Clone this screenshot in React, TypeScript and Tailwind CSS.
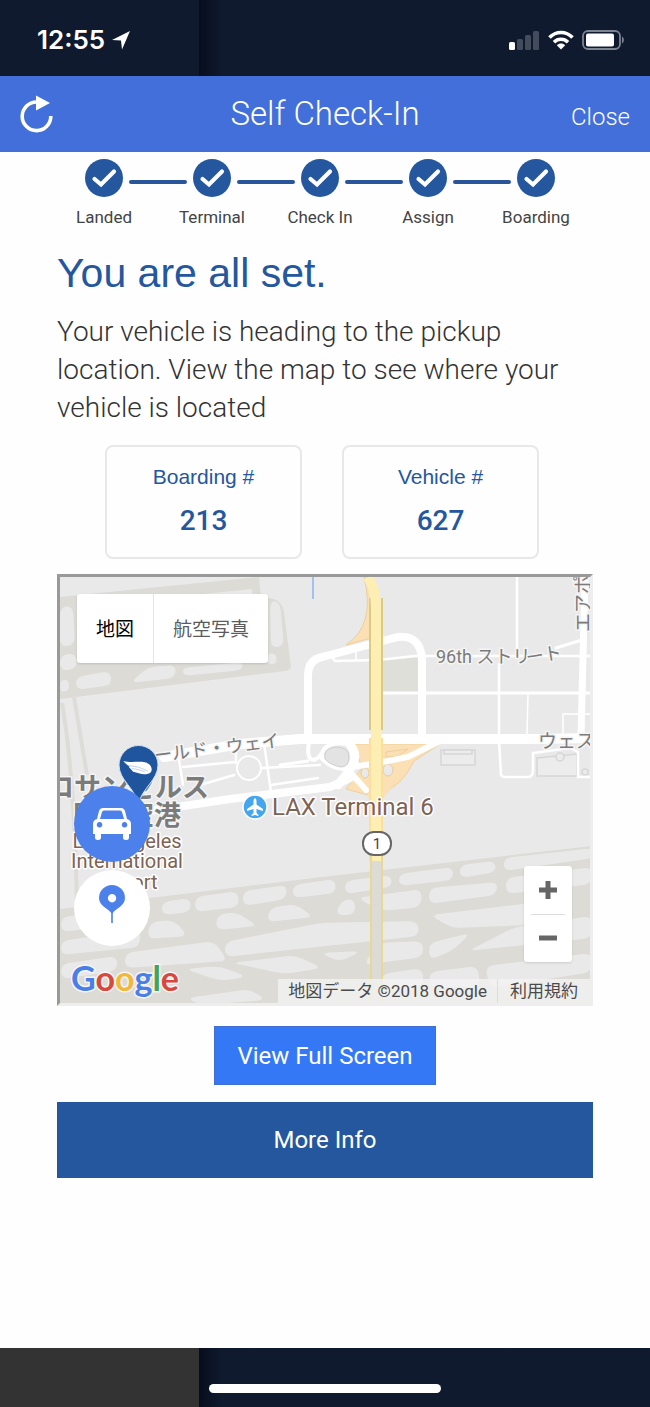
import type { ReactNode } from 'react';

const steps = ['Landed', 'Terminal', 'Check In', 'Assign', 'Boarding'];

const details = [
  { label: 'Boarding #', value: '213' },
  { label: 'Vehicle #', value: '627' },
];

// Grass areas between the taxiways
const islands = [
  '61,917 135,908 140,923 61,932',
  '162,902 190,898 191,912 162,915',
  '195,897 238,891 239,907 195,912',
  '243,891 287,885 286,899 243,906',
  '293,885 335,879 336,893 293,898',
  '345,881 391,875 392,887 345,894',
  '399,874 453,867 453,880 399,886',
  '460,865 495,861 496,872 460,878',
  '504,858 594,848 594,858 504,871',
  '61,941 140,929 140,947 61,955',
  '147,939 150,922 174,920 188,936',
  '216,930 217,915 236,912 258,926',
  '267,922 270,908 295,904 314,917',
  '335,915 342,900 355,899 355,915',
  '357,898 422,889 421,907 382,911',
  '429,888 498,882 496,895 429,904',
  '506,878 592,867 592,884 506,894',
  '125,953 214,941 228,961 125,968',
  '225,942 320,923 418,921 419,936 225,957',
  '430,915 574,898 530,925 452,928',
  '468,951 515,927 592,916 592,938',
  '61,964 117,956 117,971 61,979',
  '185,969 220,966 247,977 220,981',
  '232,963 295,955 322,968 285,974',
  '320,953 361,951 340,962',
  '363,965 379,943 423,941 423,957',
  '429,960 429,943 471,933 452,951',
  '485,966 592,953 592,972 490,988',
  '382,974 423,968 423,987 382,987',
  '429,972 478,966 480,987 430,987',
  '187,998 250,989 266,1000 200,1005',
  '60,607 73,606 75,645 60,647',
  '60,655 76,653 77,669 60,671',
  '60,680 69,680 69,691 60,692',
  '76,677 110,671 112,685 76,690',
  '130,683 148,667 176,665 175,678',
  '182,668 243,662 242,670 184,676',
  '270,601 280,602 284,646 271,648',
  '267,654 276,653 277,664 267,664',
];

const googleLetters = [
  { char: 'G', color: 'fill-[#4a7fe8]' },
  { char: 'o', color: 'fill-[#d8483c]' },
  { char: 'o', color: 'fill-[#f0b93a]' },
  { char: 'g', color: 'fill-[#4a7fe8]' },
  { char: 'l', color: 'fill-[#43a35a]' },
  { char: 'e', color: 'fill-[#d8483c]' },
];

// Turns a list of points into a closed path with rounded corners
function roundedPath(points: string, radius: number) {
  const corners = points.split(' ').map((pair) => pair.split(',').map(Number));

  const towards = (from: number[], to: number[]) => {
    const length = Math.hypot(to[0] - from[0], to[1] - from[1]);
    const ratio = Math.min(radius / length, 0.5);
    return `${from[0] + (to[0] - from[0]) * ratio} ${from[1] + (to[1] - from[1]) * ratio}`;
  };

  const segments = corners.map((corner, index) => {
    const previous = corners[(index + corners.length - 1) % corners.length];
    const next = corners[(index + 1) % corners.length];
    return `${index === 0 ? 'M' : 'L'}${towards(corner, previous)} Q${corner[0]} ${corner[1]} ${towards(corner, next)}`;
  });

  return `${segments.join(' ')} Z`;
}

function StatusBar() {
  return (
    <div className="flex h-[76px] bg-[#0f1a2e] text-white">
      <div className="flex w-[199px] items-center gap-1.5 pl-[37px] pt-1">
        <span className="font-['Inter',sans-serif] text-[26px] leading-8 font-semibold">12:55</span>
        <svg className="h-5 w-5" viewBox="0 0 20 20" fill="currentColor" aria-hidden="true">
          <path d="M19 1 L1 10 L10 10.6 L11 19.5 Z" />
        </svg>
      </div>
      <div className="flex flex-1 items-center justify-end gap-2 bg-linear-to-r from-[#070d1d] to-[#0f1a2e] to-5% pr-[25px] pt-1">
        <svg className="h-5 w-[31px]" viewBox="0 0 31 20" fill="currentColor" aria-hidden="true">
          <rect x="0" y="12" width="6" height="8" rx="1.5" />
          <rect x="8" y="9" width="6" height="11" rx="1.5" opacity=".22" />
          <rect x="16" y="5" width="6" height="15" rx="1.5" opacity=".22" />
          <rect x="24" y="1" width="6" height="19" rx="1.5" opacity=".22" />
        </svg>
        <svg className="h-5 w-[26px]" viewBox="0 0 26 20" fill="none" stroke="currentColor" strokeWidth="3.6" aria-hidden="true">
          <path d="M1.5 7.5 C8 0.8 18 0.8 24.5 7.5" />
          <path d="M6 12.2 C10 8.3 16 8.3 20 12.2" />
          <path d="M13 19.5 L8.8 15.2 C11.2 13 14.8 13 17.2 15.2 Z" fill="currentColor" stroke="none" />
        </svg>
        <svg className="h-5 w-[43px]" viewBox="0 0 43 20" aria-hidden="true">
          <rect x="1" y="1" width="37" height="18" rx="5" fill="none" stroke="#7d8391" strokeWidth="1.8" />
          <rect x="4" y="3.5" width="28" height="13" rx="2" fill="#fff" />
          <path d="M40 6.5 C42.5 8 42.5 12 40 13.5 Z" fill="#7d8391" />
        </svg>
      </div>
    </div>
  );
}

function Header() {
  return (
    <header className="grid h-[76px] grid-cols-[1fr_auto_1fr] items-center bg-[#426fda] px-5 font-light text-white">
      <button type="button" aria-label="Refresh" className="justify-self-start">
        <svg className="h-10 w-9" viewBox="0 0 36 40" aria-hidden="true">
          <path d="M30.8 22 A14.3 14.3 0 1 1 16.5 8" fill="none" stroke="#fff" strokeWidth="3.6" />
          <path d="M16 1.5 L30 9 L16 16.5 Z" fill="#fff" />
        </svg>
      </button>
      <h1 className="text-[33px] leading-10">Self Check-In</h1>
      <button type="button" className="justify-self-end pt-1.5 text-[24px] leading-8">Close</button>
    </header>
  );
}

function Steps() {
  return (
    <ol className="flex pt-[7px] pr-[95px] pl-[85px]">
      {steps.map((step, index) => {
        const isLast = index === steps.length - 1;

        return (
          <li key={step} className={isLast ? 'flex' : 'flex flex-1'}>
            <div className="flex w-[38px] flex-col items-center gap-2">
              <svg className="size-[38px]" viewBox="0 0 38 38" aria-hidden="true">
                <circle cx="19" cy="19" r="19" fill="#24579e" />
                <path d="M9.5 20 L16 25.5 L29 12.5" fill="none" stroke="#fff" strokeWidth="4.2" strokeLinecap="round" />
              </svg>
              <span className="text-[17px] leading-6 whitespace-nowrap text-[#444]">{step}</span>
            </div>
            {!isLast && <div className="mx-1.5 mt-[21px] h-1 flex-1 rounded-full bg-[#2b559a]" />}
          </li>
        );
      })}
    </ol>
  );
}

function MapDrawing() {
  return (
    <svg
      className="absolute inset-0 h-full w-full font-['Roboto','Noto_Sans_CJK_JP',sans-serif]"
      viewBox="60 577 530 426"
      preserveAspectRatio="xMidYMid slice"
      lang="ja"
      role="img"
      aria-label="LAX Terminal 6"
    >
      <rect x="0" y="500" width="700" height="600" fill="#e9e9e9" />

      {/* Taxiways */}
      <g fill="#dcdbd6">
        <path d="M60 597 L259 577 L261 598 Q281 596 284 612 L291 667 Q290 670 285 671 L60 699 Z" />
        <path d="M60 909 L330 876 L592 846 V1003 H60 Z" />
      </g>
      <path d="M78 607 L252 589 L256 660 L80 662 Z" fill="#e9e9e9" />
      <path d="M74 697 L87 775 M62 703 Q74 770 77 905" stroke="#dddcd8" strokeWidth="4" fill="none" />
      <g fill="#e9e9e9">
        {islands.map((points) => (
          <path key={points} d={roundedPath(points, 9)} />
        ))}
      </g>

      {/* Blocks and buildings */}
      <path d="M383 660 L419 657 V692 H383 Z" fill="#dfdfda" />
      <g fill="#ececec" stroke="#d6d6d6" strokeWidth="1.5">
        <rect x="441" y="750" width="34" height="15" />
        <rect x="444" y="750" width="28" height="4" />
        <path d="M537 758 L577 754 V776 H537 Z" />
        <circle cx="560" cy="757" r="4" />
        <circle cx="585" cy="772" r="3" />
      </g>

      {/* Interchange */}
      <g fill="#fae0b4" stroke="#eed09c" strokeWidth="1">
        <path d="M354 744 H440 L414 761 Q400 789 382 791 L368 795 L346 789 L362 768 Z" />
        <path d="M364 577 Q376 625 346 645 L371 638 V577 Z" />
        <path d="M366 785 L392 788 L383 798 V830 H369 V800 Z" stroke="none" />
        <path d="M386 752 L408 749 L398 756 L386 757 Z" fill="none" />
      </g>
      <g fill="#e9e9e9" stroke="#e6cd9f" strokeWidth="1">
        <ellipse cx="388" cy="770" rx="5" ry="6" />
        <ellipse cx="365" cy="773" rx="4" ry="5" />
      </g>

      {/* Streets */}
      <g fill="none" stroke="#fff" strokeLinecap="round">
        <path d="M164 757 L240 744 L300 739 H540 L592 738" strokeWidth="10" />
        <path d="M130 814 L230 799 L330 787 L350 778" strokeWidth="8" />
        <path d="M308 738 V676 Q308 660 322 657 L398 637 Q421 635 422 660 V736" strokeWidth="8" />
        <path d="M585 577 L583 658 L581 736" strokeWidth="7" />
        <path d="M322 757 Q334 771 352 767 L378 763 L408 757 L440 741" strokeWidth="6" />
        <path d="M348 742 Q359 754 352 766 Q346 776 338 785" strokeWidth="9" />
        <path d="M350 772 L366 790" strokeWidth="6" />
        <path d="M309 742 Q306 760 314 760 Q320 758 324 749 Q332 741 348 744" strokeWidth="4" />
        <path d="M280 765 L308 761" strokeWidth="3" />
        <path d="M383 693 H592" strokeWidth="3" />
        <path d="M331 656 L335 661 L378 660 L415 656 H592" strokeWidth="2.5" />
        <path d="M517 577 V648 M499 664 V740 L501 775 Q502 777 505 777 H528 Q533 777 533 770 V753 L570 748 L578 752 V777 H592" strokeWidth="2.5" />
        <path d="M528 695 L527 736 M592 714 H563 V736 M356 652 V660" strokeWidth="1.5" />
        <path d="M556 648 L582 640" strokeWidth="3" />
        <path d="M178 753 L183 785 M183 767 L235 762 M200 785 L234 775 M264 743 L271 792 M262 768 L320 765 M271 785 L318 778 M236 752 V763" strokeWidth="2.5" />
        <circle cx="249" cy="768" r="12" strokeWidth="2" />
      </g>
      <path d="M325 759 Q323 748 336 747 Q349 747 349 757 Q349 767 341 767 Q330 765 325 759 Z" fill="#e3e3e3" stroke="#cfcfcf" />

      {/* Highway */}
      <path d="M370 598 V730 M382 598 V730" stroke="#dcca82" strokeWidth="2" />
      <path d="M376 738 V861" stroke="#fcdf9b" strokeWidth="14" />
      <path d="M368 577 Q376 590 376 607 V861" fill="none" stroke="#fdeeb4" strokeWidth="10" />
      <path d="M376 861 V1003" stroke="#dcdbd6" strokeWidth="10" />
      <path d="M371 855 V1003 M382 855 V1003" stroke="#e9d894" strokeWidth="2" />
      <path d="M313 577 V599" stroke="#a3c0ee" strokeWidth="2" />

      {/* Labels */}
      <g fill="#7b7b7b" stroke="#f5f5f5" strokeWidth="3" strokeLinejoin="round" className="[paint-order:stroke]">
        <text x="436" y="663" fontSize="18">96th ストリ</text>
        <text x="527" y="664" fontSize="18" transform="rotate(-9 527 664)">ート</text>
        <text x="538" y="748" fontSize="19">ウェス</text>
        <text x="0" y="0" fontSize="19" transform="translate(590 632) rotate(-90)">エアポ</text>
        <text x="155" y="762" fontSize="18" transform="rotate(-7 155 762)">ールド・ウェイ</text>
        <text x="47" y="797" fontSize="27" fontWeight="700">ロサンゼルス</text>
        <text x="73" y="825" fontSize="27" fontWeight="700">国際空港</text>
      </g>
      <g fill="#7e6252" stroke="#fff" strokeWidth="3" strokeLinejoin="round" className="[paint-order:stroke]">
        <text x="127" y="848" fontSize="20" textAnchor="middle">Los Angeles</text>
        <text x="127" y="868" fontSize="20" textAnchor="middle">International</text>
        <text x="127" y="889" fontSize="20" textAnchor="middle">Airport</text>
        <text x="272" y="815" fontSize="24">LAX Terminal 6</text>
      </g>

      {/* Airport badge */}
      <circle cx="255" cy="807" r="12" fill="#45a6ee" stroke="#fff" strokeWidth="1.5" />
      <path
        d="M255 798 Q256.500 799 256.500 801 V804.500 L263 809 V811 L256.500 809 V813 L258.500 815 V816 L255 815 L251.500 816 V815 L253.500 813 V809 L247 811 V809 L253.500 804.500 V801 Q253.500 799 255 798 Z"
        fill="#fff"
      />

      {/* Route shield */}
      <rect x="363" y="832" width="28" height="23" rx="11" fill="#fff" stroke="#666" strokeWidth="2" />
      <text x="377" y="849" fontSize="15" textAnchor="middle" fill="#444">1</text>

      {/* Vehicle pin */}
      <path
        d="M138.500 804 C135 788 119 780 119 765 A19.500 19.500 0 0 1 158 765 C158 780 142 788 138.500 804 Z"
        fill="#1f559d"
        stroke="#cfe0f5"
        strokeWidth="1"
      />
      <path d="M123.500 761 C133 764 144 759 150 765 C153 769 152 774 147 774 C142 775 139 773 136 772.500 C131 771.500 133 770 129 767.500 C131 766.500 126 765 123.500 761 Z" fill="#fff" />
      <path d="M128 765.500 Q139 766 148 771 M132 768.500 Q139 769 145 772" fill="none" stroke="#b4c9e5" strokeWidth="0.8" />

      {/* Provider logo */}
      <text x="71" y="991" fontSize="34" className="font-['Lato',sans-serif] font-bold [paint-order:stroke]" stroke="#f5f5f5" strokeWidth="3">
        {googleLetters.map((letter, index) => (
          <tspan key={index} className={letter.color}>{letter.char}</tspan>
        ))}
      </text>
    </svg>
  );
}

interface RoundButtonProps {
  label: string;
  className: string;
  children: ReactNode;
}

function RoundButton({ label, className, children }: RoundButtonProps) {
  return (
    <button type="button" aria-label={label} className={`flex size-[76px] items-center justify-center rounded-full ${className}`}>
      {children}
    </button>
  );
}

function VehicleMap() {
  return (
    <div className="relative h-[432px] overflow-hidden border-3 border-t-[#999] border-r-[#eee] border-b-[#eee] border-l-[#999]">
      <MapDrawing />

      <div lang="ja" className="absolute top-[17px] left-[17px] flex h-[69px] rounded-[3px] bg-white pt-1 font-['Roboto','Noto_Sans_CJK_JP',sans-serif] text-[19px] shadow">
        <button type="button" className="-mt-1 border-r border-[#e4e4e4] px-[19px] pt-1 text-black">地図</button>
        <button type="button" className="px-[19px] text-[#5c5c5c]">航空写真</button>
      </div>

      <div className="absolute bottom-[57px] left-[14px] flex flex-col gap-2">
        <RoundButton label="Show vehicle" className="bg-[#4c80ea]">
          <svg className="h-8 w-[38px]" viewBox="0 0 38 32" aria-hidden="true">
            <path
              fillRule="evenodd"
              fill="#fff"
              d="M10 0 H28 Q31 0 32 3 L34 11 Q38 12 38 16 V26 H36 V29.500 Q36 32 33 32 Q30 32 30 29.500 V26 H8 V29.500 Q8 32 5 32 Q2 32 2 29.500 V26 H0 V16 Q0 12 4 11 L6 3 Q7 0 10 0 Z M11 2.500 Q9.500 2.500 9 4 L7 11 H31 L29 4 Q28.500 2.500 27 2.500 Z M6.500 14 A2.800 2.800 0 1 0 6.600 14 Z M31.500 14 A2.800 2.800 0 1 0 31.600 14 Z"
            />
          </svg>
        </RoundButton>
        <RoundButton label="Show pickup location" className="bg-white">
          <svg className="h-[46px] w-[26px]" viewBox="0 0 26 46" aria-hidden="true">
            <path
              fillRule="evenodd"
              fill="#4c80ea"
              d="M13 0 A13 13 0 0 1 26 13 C26 21 17 23 13.800 28 V38 H12.200 V28 C9 23 0 21 0 13 A13 13 0 0 1 13 0 Z M13 9 A4.200 4.200 0 1 0 13.100 9 Z"
            />
          </svg>
        </RoundButton>
      </div>

      <div className="absolute right-[18px] bottom-[41px] flex h-24 w-12 flex-col items-center rounded-[3px] bg-white shadow">
        <button type="button" aria-label="Zoom in" className="flex w-full flex-1 items-center justify-center">
          <svg className="size-[18px]" viewBox="0 0 18 18" aria-hidden="true">
            <path d="M9 0 V18 M0 9 H18" stroke="#666" strokeWidth="5" />
          </svg>
        </button>
        <div className="h-px w-[34px] bg-[#ddd]" />
        <button type="button" aria-label="Zoom out" className="flex w-full flex-1 items-center justify-center">
          <svg className="size-[18px]" viewBox="0 0 18 18" aria-hidden="true">
            <path d="M0 9 H18" stroke="#666" strokeWidth="5" />
          </svg>
        </button>
      </div>

      <div lang="ja" className="absolute right-0 bottom-0 flex h-6 items-center bg-[#f2f2f2]/80 font-['Roboto','Noto_Sans_CJK_JP',sans-serif] text-[17px] leading-6 whitespace-nowrap text-[#4a4a4a]">
        <span className="px-2.5">地図データ ©2018 Google</span>
        <a href="#terms" className="border-l border-[#ddd] px-3">利用規約</a>
      </div>
    </div>
  );
}

export default function App() {
  return (
    <div className="flex min-h-screen flex-col bg-[#fefefe] font-['Roboto',sans-serif]">
      <StatusBar />
      <Header />
      <Steps />

      <main className="flex flex-col px-[57px] pb-10">
        <h2 className="mt-5 font-['Liberation_Sans',sans-serif] text-[41px] leading-12 text-[#24579e]">You are all set.</h2>
        <p className="mt-4 text-[28px] leading-[38px] font-light text-[#333]">
          Your vehicle is heading to the pickup location. View the map to see where your vehicle is located
        </p>

        <dl className="mt-[18px] mb-[15px] grid grid-cols-2 gap-10 pr-[54px] pl-12 text-center text-[#24579e]">
          {details.map((detail) => (
            <div key={detail.label} className="h-[114px] rounded-lg border-2 border-[#e8e8e8] pt-[18px]">
              <dt className="font-['Liberation_Sans',sans-serif] text-[21px] leading-6">{detail.label}</dt>
              <dd className="mt-4 text-[28px] leading-8 font-medium">{detail.value}</dd>
            </div>
          ))}
        </dl>

        <VehicleMap />

        <button type="button" className="mt-5 h-[59px] self-center border border-[#3f6fd0] bg-[#3578f5] px-[22px] text-[24px] text-white">
          View Full Screen
        </button>
        <button type="button" className="mt-[17px] h-[76px] bg-[#24579e] text-[24px] text-white">
          More Info
        </button>
      </main>

      <footer className="mt-auto flex h-[59px] bg-[#0f1a2e]">
        <div className="w-[199px] bg-[#333]" />
        <div className="flex flex-1 items-end bg-linear-to-r from-[#070d1d] to-[#0f1a2e] to-5% pb-3.5 pl-2.5">
          <div className="h-[9px] w-[232px] rounded-full bg-white" />
        </div>
      </footer>
    </div>
  );
}
